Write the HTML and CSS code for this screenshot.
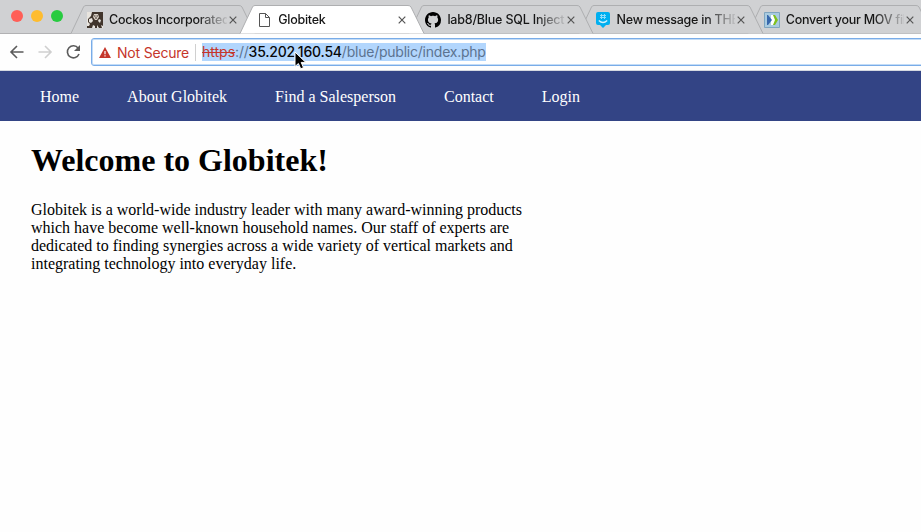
FILE: index.html
```html
<!DOCTYPE html>
<html lang="en">
<head>
<meta charset="utf-8">
<title>Globitek</title>
<link rel="stylesheet" href="styles.css">
</head>
<body>
<div class="browser">
  <div class="tabstrip">
    <div class="lights"><i class="red"></i><i class="yellow"></i><i class="green"></i></div>
    <div class="tab t1">
      <svg class="shape" viewBox="0 0 184 29"><path d="M0 28.5L12.5 2Q13.2.5 15 .5H168Q170 .5 171 2L184 28.5"/></svg>
      <svg class="icon" viewBox="0 0 16 16"><path fill="#41352c" d="M0 0h16v16H0z"/><path fill="#e8e4de" d="M0 0h5L4 4 1 7v3l2 2-1 2H0zM2 7l3-1 1 3-2 2-2-1zM12 7l2 1-1 3-2-2zM5 16l1-3 2 1v2zM10 16v-3l2 3zM14 13l2 1v2h-1z"/><path fill="#d8cfc4" d="M7 2h4l1 3-2 3H8L6 5z"/><path fill="#41352c" d="M7 3.500h1.500v1H7zM9.500 3.500H11v1H9.500zM8 5.500h2v1H8z"/></svg>
      <span class="title"><span>Cockos Incorporated</span></span>
      <svg class="close" viewBox="0 0 8 8"><path d="M.7.7l6.6 6.6M7.3.7L.7 7.3"/></svg>
    </div>
    <div class="tab t2 active">
      <svg class="shape" viewBox="0 0 184 29"><path d="M0 28.5L12.5 2Q13.2.5 15 .5H168Q170 .5 171 2L184 28.5"/></svg>
      <svg class="icon" viewBox="0 0 16 16"><path fill="#fff" stroke="#555" d="M3.5 1.5h6l4 4v9h-10zM9.5 1.5v4h4"/></svg>
      <span class="title"><span>Globitek</span></span>
      <svg class="close" viewBox="0 0 8 8"><path d="M.7.7l6.6 6.6M7.3.7L.7 7.3"/></svg>
    </div>
    <div class="tab t3">
      <svg class="shape" viewBox="0 0 184 29"><path d="M0 28.5L12.5 2Q13.2.5 15 .5H168Q170 .5 171 2L184 28.5"/></svg>
      <svg class="icon" viewBox="0 0 16 16"><path fill="#000" d="M8 0C3.58 0 0 3.58 0 8c0 3.54 2.29 6.53 5.47 7.59.4.07.55-.17.55-.38 0-.19-.01-.82-.01-1.49-2.01.37-2.53-.49-2.69-.94-.09-.23-.48-.94-.82-1.13-.28-.15-.68-.52-.01-.53.63-.01 1.08.58 1.23.82.72 1.21 1.87.87 2.33.66.07-.52.28-.87.51-1.07-1.78-.2-3.64-.89-3.64-3.95 0-.87.31-1.59.82-2.15-.08-.2-.36-1.02.08-2.12 0 0 .67-.21 2.2.82.64-.18 1.32-.27 2-.27s1.36.09 2 .27c1.53-1.04 2.2-.82 2.2-.82.44 1.1.16 1.92.08 2.12.51.56.82 1.27.82 2.15 0 3.07-1.87 3.75-3.65 3.95.29.25.54.73.54 1.48 0 1.07-.01 1.93-.01 2.2 0 .21.15.46.55.38A8.01 8.01 0 0 0 16 8c0-4.42-3.58-8-8-8z"/></svg>
      <span class="title"><span>lab8/Blue SQL Injecti</span></span>
      <svg class="close" viewBox="0 0 8 8"><path d="M.7.7l6.6 6.6M7.3.7L.7 7.3"/></svg>
    </div>
    <div class="tab t4">
      <svg class="shape" viewBox="0 0 184 29"><path d="M0 28.5L12.5 2Q13.2.5 15 .5H168Q170 .5 171 2L184 28.5"/></svg>
      <svg class="icon" viewBox="0 0 16 16"><path fill="#00aff0" d="M3 0h10q2 0 2 2v9q0 2-2 2h-2l-3 3-3-3H3q-2 0-2-2V2q0-2 2-2z"/><path fill="none" stroke="#8fdcfa" d="M6.500 2v5M9.500 2v5M5 3.500h6M5 5.500h6"/><path fill="none" stroke="#d5f1fc" stroke-width="1.300" d="M3.800 8.500q4.200 4 8.400 0"/></svg>
      <span class="title"><span>New message in THE</span></span>
      <svg class="close" viewBox="0 0 8 8"><path d="M.7.7l6.6 6.6M7.3.7L.7 7.3"/></svg>
    </div>
    <div class="tab t5">
      <svg class="shape" viewBox="0 0 184 29"><path d="M0 28.5L12.5 2Q13.2.5 15 .5H168Q170 .5 171 2L184 28.5"/></svg>
      <svg class="icon" viewBox="0 0 16 16"><path fill="#a9cbe0" stroke="#7fa5bf" d="M.5.500h15v15H.5z"/><path fill="#fff" d="M7 3h2l4 5-4 5H7z"/><path fill="#3768ac" d="M3 3h1l4 5-4 5H3z"/><path fill="#80c01d" d="M9 3h2l3 5-3 5H9l2-5z"/></svg>
      <span class="title"><span>Convert your MOV file</span></span>
      <svg class="close" viewBox="0 0 8 8"><path d="M.7.7l6.6 6.6M7.3.7L.7 7.3"/></svg>
    </div>
  </div>
  <div class="toolbar">
    <svg class="tool" viewBox="0 0 16 16"><path d="M14.500 8H2M8 2L2 8l6 6"/></svg>
    <svg class="tool off" viewBox="0 0 16 16"><path d="M1.500 8H14M8 2l6 6-6 6"/></svg>
    <svg class="tool" viewBox="0 0 16 16"><path d="M13.200 4.200A6 6 0 1 0 14 10"/><path class="solid" d="M15 1v6H9z"/></svg>
    <div class="omnibox">
      <svg class="warn" viewBox="0 0 12 11"><path fill="#c5362b" d="M6 0l6 11H0z"/><path fill="#fff" d="M5.400 4h1.200v3.200H5.400zM5.400 8.200h1.200v1.200H5.400z"/></svg>
      <span class="insecure">Not Secure</span>
      <span class="url"><s>https</s><span class="slashes">://</span><b>35.202.160.54</b><span class="path">/blue/public/index.php</span></span>
    </div>
  </div>
  <nav class="menu"><a>Home</a><a>About Globitek</a><a>Find a Salesperson</a><a>Contact</a><a>Login</a></nav>
  <main>
    <h1>Welcome to Globitek!</h1>
    <p>Globitek is a world-wide industry leader with many award-winning products which have become well-known household names. Our staff of experts are dedicated to finding synergies across a wide variety of vertical markets and integrating technology into everyday life.</p>
  </main>
  <svg class="cursor" viewBox="0 0 13 19"><path d="M1 1v14.500l3.400-3 2.300 5.300 2.800-1.200-2.300-5.200h4.600z"/></svg>
</div>
</body>
</html>
```
FILE: styles.css
```css
* { box-sizing: border-box; }
body { margin: 0; background: #fefefe; }
.browser { position: relative; width: 921px; height: 532px; overflow: hidden; font-family: Inter, sans-serif; }
svg { display: block; flex: none; overflow: visible; }

.tabstrip { display: flex; height: 34px; padding-top: 5px; background: #d0d1d3; border-bottom: 1px solid #b1b1b3; }
.lights { display: flex; flex: none; gap: 8px; width: 71px; padding: 5px 0 0 11px; }
.lights i { width: 12px; height: 12px; border-radius: 50%; }
.red { background: #ff5f57; }
.yellow { background: #febc2e; }
.green { background: #28cb40; }
.tab { position: relative; display: flex; flex: none; align-items: center; width: 169.2px; height: 29px; padding-left: 16px; font-size: 12.5px; font-weight: 500; letter-spacing: -0.2px; color: #161616; }
.shape { position: absolute; z-index: -1; left: 0; top: 0; width: 184px; height: 29px; fill: #d0d1d3; stroke: #aeafb1; stroke-width: 1; }
.active .shape { fill: #fff; }
.t1 { z-index: 5; }
.t2 { z-index: 6; }
.t3 { z-index: 4; }
.t4 { z-index: 3; }
.t5 { z-index: 2; }
.icon { width: 16px; height: 16px; }
.title { width: 118px; margin-left: 6px; overflow: hidden; white-space: nowrap; -webkit-mask-image: linear-gradient(to right, #000 88px, transparent 121px); mask-image: linear-gradient(to right, #000 88px, transparent 121px); }
.close { width: 8px; height: 8px; margin-left: 2px; fill: none; stroke: #555; stroke-width: 1.2; }
.t1 .title { letter-spacing: -0.25px; }
.t2 .title { letter-spacing: -0.25px; }
.t4 .title, .t5 .title { letter-spacing: -0.25px; }

.toolbar { display: flex; align-items: center; height: 37px; padding-left: 9px; background: #fefefe; border-bottom: 1px solid #d5d9e0; }
.tool { width: 16px; height: 16px; margin-right: 12px; fill: none; stroke: #5b5b5b; stroke-width: 1.6; }
.tool .solid { fill: #5b5b5b; stroke: none; }
.tool.off { stroke: #cfcfcf; }
.omnibox { display: flex; align-items: center; flex: 1; height: 28px; margin: 0 -4px 0 -2px; padding-left: 7px; border: 1px solid #79ace8; border-radius: 3px; box-shadow: inset 0 0 0 1px #c3dcf7; font-size: 14px; white-space: nowrap; background: #fff; }
.warn { width: 12px; height: 11px; }
.insecure { width: 79px; height: 17px; margin: 0 6px 0 6px; line-height: 17px; letter-spacing: -0.2px; border-right: 1px solid #d0d0d0; color: #c5362b; }
.url { width: 284px; height: 18px; line-height: 18px; background: #b2d6fd; color: #5c7390; }
.url s { color: #c5362b; }
.slashes { letter-spacing: -0.2px; }
.url b { font-weight: 500; letter-spacing: -0.2px; color: #080808; }
.path { letter-spacing: -0.23px; }

.menu { display: flex; gap: 48px; height: 50px; padding-left: 40px; line-height: 52px; background: #334485; color: #fff; font-family: "Liberation Serif", serif; font-size: 16px; }
main { padding: 20px 31px; color: #000; font-family: "Liberation Serif", serif; }
h1 { margin: 0 0 22px; font-size: 32px; line-height: 38px; }
p { width: 500px; margin: 0; font-size: 16px; line-height: 18px; }
.cursor { position: absolute; left: 294px; top: 51px; width: 13px; height: 19px; fill: #000; stroke: #fff; stroke-width: 1; }
```
